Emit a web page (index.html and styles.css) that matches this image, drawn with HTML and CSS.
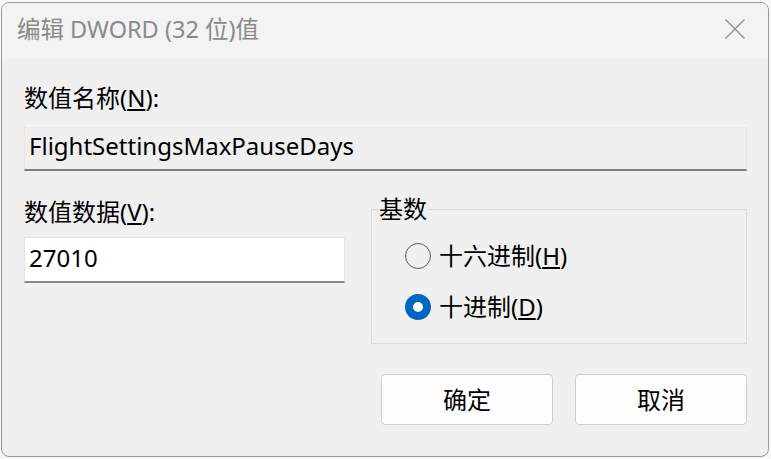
FILE: index.html
```html
<!DOCTYPE html>
<html lang="zh-CN">
<head>
<meta charset="utf-8">
<title>编辑 DWORD (32 位)值</title>
<link rel="stylesheet" href="styles.css">
</head>
<body>
<div class="backdrop">
  <div class="dialog">
    <div class="titlebar">
      <span class="title">编辑 DWORD (32 位)值</span>
      <svg class="close" width="20" height="20" viewBox="0 0 20 20"><path d="M0.5 0.5 L19.5 19.5 M19.5 0.5 L0.5 19.5" stroke="#8f8f8f" stroke-width="1.3" fill="none"/></svg>
    </div>
    <div class="content">
      <div class="label">数值名称(<u>N</u>):</div>
      <div class="field field-disabled">FlightSettingsMaxPauseDays</div>
      <div class="lower">
        <div class="datacol">
          <div class="label">数值数据(<u>V</u>):</div>
          <div class="field field-edit">27010</div>
        </div>
        <fieldset class="group">
          <legend>基数</legend>
          <div class="radios">
            <div class="radio-row"><span class="radio"></span><span>十六进制(<u>H</u>)</span></div>
            <div class="radio-row"><span class="radio checked"></span><span>十进制(<u>D</u>)</span></div>
          </div>
        </fieldset>
      </div>
      <div class="buttons">
        <div class="btn">确定</div>
        <div class="btn">取消</div>
      </div>
    </div>
  </div>
</div>
</body>
</html>
```

FILE: styles.css
```css
html, body {
  margin: 0;
  padding: 0;
}
body {
  width: 771px;
  height: 459px;
  background: #f7f7f7;
  overflow: hidden;
  font-family: "Noto Sans", "Noto Sans CJK SC", sans-serif;
}
.backdrop {
  padding: 2px 2px 2px 1px;
}
.dialog {
  width: 766px;
  height: 453px;
  background: #f0f0f0;
  border: 1px solid #9a9a9a;
  border-radius: 8px;
  overflow: hidden;
  display: flex;
  flex-direction: column;
}
.titlebar {
  height: 55px;
  background: #f3f3f3;
  display: flex;
  align-items: center;
  justify-content: space-between;
  padding: 0 23px 0 15px;
  flex-shrink: 0;
}
.title {
  font-size: 23.5px;
  color: #8a8a8a;
  line-height: 30px;
  margin-top: -4px;
}
.close {
  margin-top: -4px;
}
.content {
  padding: 25px 21px 0 22px;
  display: flex;
  flex-direction: column;
}
.label {
  font-size: 24px;
  line-height: 30px;
  height: 30px;
  color: #000;
}
.field {
  height: 46px;
  box-sizing: border-box;
  font-size: 24px;
  line-height: 40px;
  padding: 0 4px;
  color: #000;
}
.field-disabled {
  margin-top: 12px;
  background: #efefef;
  border: 1px solid #e6e6e6;
  border-top-color: #fbfbfb;
  border-bottom: 2px solid #7c7c7c;
}
.lower {
  display: flex;
  gap: 26px;
  margin-top: 26px;
}
.datacol {
  width: 321px;
  display: flex;
  flex-direction: column;
  gap: 10px;
}
.field-edit {
  background: #ffffff;
  border: 1px solid #e4e4e4;
  border-bottom: 2px solid #8a8a8a;
}
.group {
  flex: 1;
  margin: 0;
  padding: 0;
  border: 1px solid #dcdcdc;
  height: 147px;
  box-sizing: border-box;
}
.group legend {
  font-size: 24px;
  line-height: 24px;
  padding: 0 1px;
  margin-left: 6px;
  color: #000;
}
.radios {
  padding: 21px 0 0 33px;
  display: flex;
  flex-direction: column;
  gap: 23px;
}
.radio-row {
  display: flex;
  align-items: center;
  gap: 8px;
  font-size: 24px;
  line-height: 28px;
  color: #000;
}
.radio {
  width: 26px;
  height: 26px;
  box-sizing: border-box;
  border-radius: 50%;
  border: 1.5px solid #5c5c5c;
  background: #f0f0f0;
  flex-shrink: 0;
}
.radio.checked {
  border: 8px solid #0067c0;
  background: #ffffff;
}
.buttons {
  display: flex;
  justify-content: flex-end;
  gap: 22px;
  margin-top: 30px;
}
.btn {
  width: 172px;
  height: 51px;
  box-sizing: border-box;
  border: 1px solid #cfcfcf;
  border-radius: 4px;
  background: #fdfdfd;
  font-size: 24px;
  line-height: 49px;
  text-align: center;
  color: #000;
}
```
